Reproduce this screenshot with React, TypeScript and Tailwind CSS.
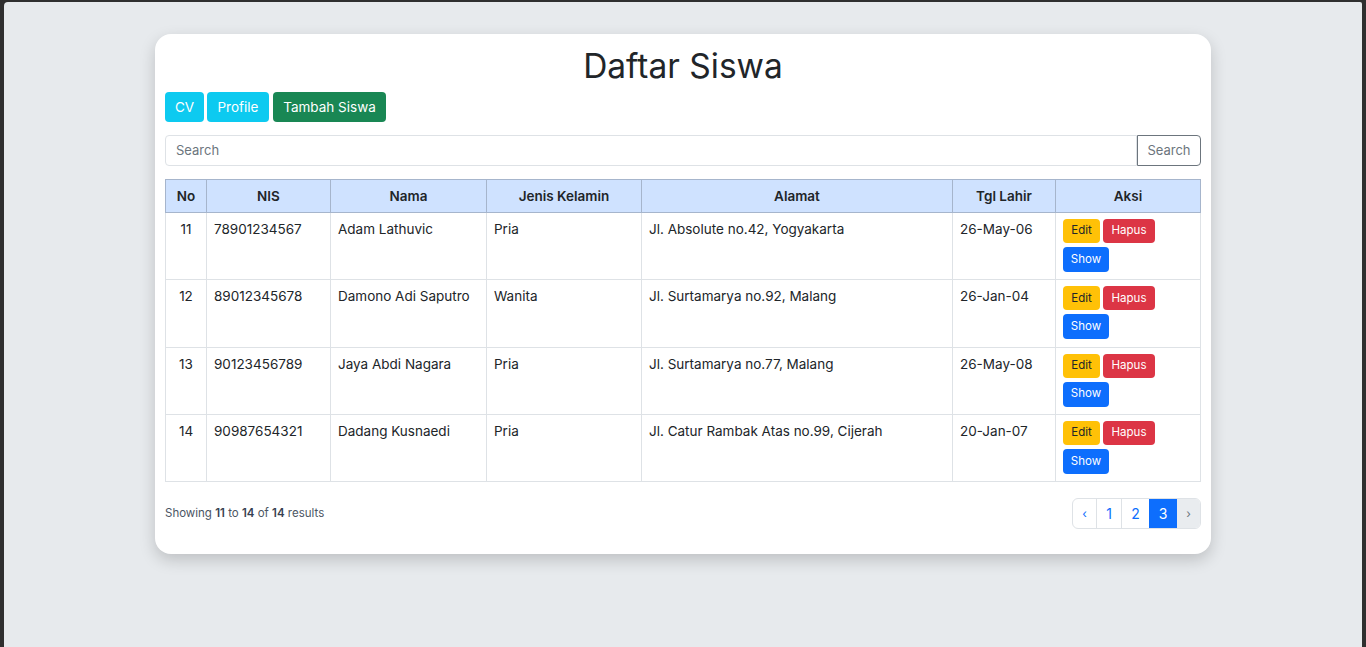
import React from "react";

type Siswa = {
  no: number;
  nis: string;
  nama: string;
  jk: string;
  alamat: string;
  tgl: string;
};

const rows: Siswa[] = [
  { no: 11, nis: "78901234567", nama: "Adam Lathuvic", jk: "Pria", alamat: "Jl. Absolute no.42, Yogyakarta", tgl: "26-May-06" },
  { no: 12, nis: "89012345678", nama: "Damono Adi Saputro", jk: "Wanita", alamat: "Jl. Surtamarya no.92, Malang", tgl: "26-Jan-04" },
  { no: 13, nis: "90123456789", nama: "Jaya Abdi Nagara", jk: "Pria", alamat: "Jl. Surtamarya no.77, Malang", tgl: "26-May-08" },
  { no: 14, nis: "90987654321", nama: "Dadang Kusnaedi", jk: "Pria", alamat: "Jl. Catur Rambak Atas no.99, Cijerah", tgl: "20-Jan-07" },
];

export default function App() {
  return (
    <div className="h-[647px] bg-[#2f2f2f] pt-[2px] px-[4px] font-['Inter',sans-serif] text-[#212529]">
      <div className="h-full bg-[#e7eaed] rounded-tl-[4px] rounded-tr-[2px] pt-[32px]">
        {/* card */}
        <div className="mx-auto w-[1056px] bg-white rounded-[16px] shadow-[0_6px_16px_rgba(0,0,0,0.18)] px-[10px] pt-[8px] pb-[25px]">
          <h1 className="h-[48px] leading-[48px] text-center text-[33.5px] font-normal text-[#212529] mb-[2px]">
            Daftar Siswa
          </h1>

          {/* top buttons */}
          <div className="flex h-[30px]">
            <button className="w-[39px] h-[30px] rounded-[4px] bg-[#0dcaf0] text-white text-[13.5px]">CV</button>
            <button className="ml-[3px] w-[62px] h-[30px] rounded-[4px] bg-[#0dcaf0] text-white text-[13.5px]">Profile</button>
            <button className="ml-[4px] w-[113px] h-[30px] rounded-[4px] bg-[#198754] text-white text-[13.5px]">Tambah Siswa</button>
          </div>

          {/* search */}
          <div className="flex mt-[13px] h-[31px]">
            <div className="flex-1 border border-[#dee2e6] rounded-l-[4px] flex items-center px-[10px] text-[13px] text-[#6c757d]">
              Search
            </div>
            <button className="w-[64px] border border-[#6c757d] rounded-r-[4px] text-[13px] text-[#6c757d]">Search</button>
          </div>

          {/* table */}
          <table className="mt-[13px] w-full table-fixed border-collapse text-[13.5px]">
            <colgroup>
              <col className="w-[41px]" />
              <col className="w-[124px]" />
              <col className="w-[156px]" />
              <col className="w-[155px]" />
              <col className="w-[311px]" />
              <col className="w-[103px]" />
              <col />
            </colgroup>
            <thead>
              <tr className="bg-[#cfe2ff] h-[33px]">
                {["No", "NIS", "Nama", "Jenis Kelamin", "Alamat", "Tgl Lahir", "Aksi"].map((h) => (
                  <th key={h} className="border border-[#a6b5cc] font-semibold text-center text-[13.5px] text-[#212529]">
                    {h}
                  </th>
                ))}
              </tr>
            </thead>
            <tbody>
              {rows.map((r) => (
                <tr key={r.no} className="h-[67.25px]">
                  <td className="border border-[#dee2e6] align-top text-center pt-[6px]">{r.no}</td>
                  <td className="border border-[#dee2e6] align-top px-[7px] pt-[6px]">{r.nis}</td>
                  <td className="border border-[#dee2e6] align-top px-[7px] pt-[6px]">{r.nama}</td>
                  <td className="border border-[#dee2e6] align-top px-[7px] pt-[6px]">{r.jk}</td>
                  <td className="border border-[#dee2e6] align-top px-[7px] pt-[6px]">{r.alamat}</td>
                  <td className="border border-[#dee2e6] align-top px-[7px] pt-[6px]">{r.tgl}</td>
                  <td className="border border-[#dee2e6] align-top px-[7px] py-[6px]">
                    <div className="flex flex-wrap gap-x-[3px] gap-y-[4px]">
                      <button className="w-[37px] h-[24px] rounded-[4px] bg-[#ffc107] text-[#212529] text-[11.5px]">Edit</button>
                      <button className="w-[52px] h-[24px] rounded-[4px] bg-[#dc3545] text-white text-[11.5px]">Hapus</button>
                      <button className="w-[46px] h-[25px] rounded-[4px] bg-[#0d6efd] text-white text-[11.5px]">Show</button>
                    </div>
                  </td>
                </tr>
              ))}
            </tbody>
          </table>

          {/* footer */}
          <div className="flex items-center justify-between mt-[16px]">
            <p className="text-[11.5px] text-[#4b5563]">
              Showing <span className="font-semibold text-[#374151]">11</span> to{" "}
              <span className="font-semibold text-[#374151]">14</span> of{" "}
              <span className="font-semibold text-[#374151]">14</span> results
            </p>
            <div className="flex h-[31px] border border-[#dee2e6] rounded-[6px] overflow-hidden text-[14px]">
              <span className="w-[23px] flex items-center justify-center text-[#0d6efd] text-[12px]">‹</span>
              <span className="w-[25px] flex items-center justify-center border-l border-[#dee2e6] text-[#0d6efd]">1</span>
              <span className="w-[28px] flex items-center justify-center border-l border-[#dee2e6] text-[#0d6efd]">2</span>
              <span className="w-[28px] flex items-center justify-center bg-[#0d6efd] text-white">3</span>
              <span className="w-[23px] flex items-center justify-center bg-[#e9ecef] text-[#6c757d] text-[12px]">›</span>
            </div>
          </div>
        </div>
      </div>
    </div>
  );
}
